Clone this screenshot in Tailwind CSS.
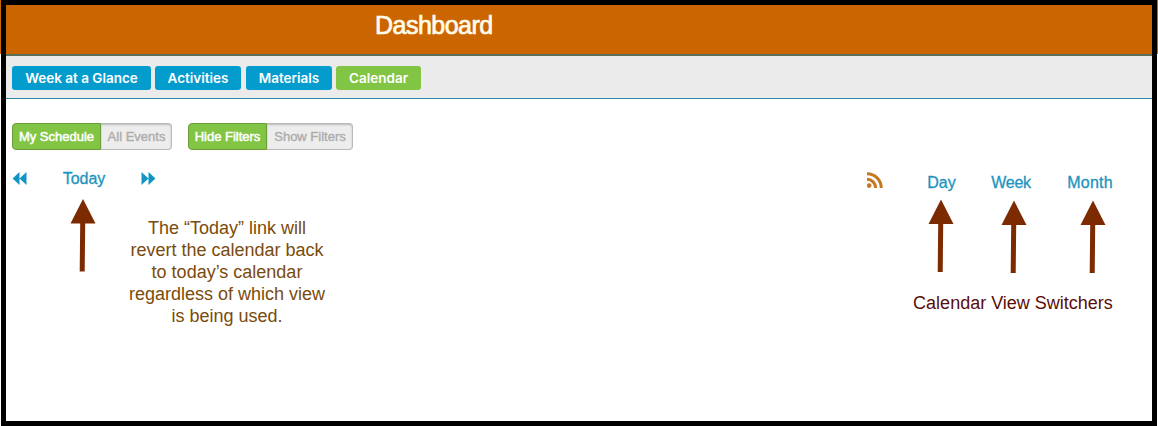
<!DOCTYPE html>
<html lang="en">
<head>
<meta charset="utf-8">
<title>Dashboard</title>
<script src="https://cdn.jsdelivr.net/npm/@tailwindcss/browser@4"></script>
</head>
<body class="bg-white font-['Liberation_Sans',Arial,sans-serif]">
<div class="relative h-[426px] w-[1158px] overflow-hidden bg-[linear-gradient(#cc6600_54px,#fff_54px)] px-px">
  <div class="flex h-full flex-col border-5 border-black bg-white">
    <header class="h-[51px] shrink-0 border-b-2 border-[#5a6f57] bg-[#cb6500] pl-[369px]">
      <h1 class="text-[25px] leading-[41px] tracking-[-0.52px] text-[#fffbe9] [-webkit-text-stroke:0.7px_#fffbe9]">Dashboard</h1>
    </header>
    <nav class="flex h-[43px] shrink-0 items-start border-b border-[#2f86a6] bg-[#ecebec] pt-2.5 pl-1.5 font-[Inter,sans-serif] text-[13.5px] leading-6 font-semibold text-white">
      <a class="mr-1 h-6 w-[139px] rounded-[3px] bg-[#049bcd] text-center whitespace-nowrap">Week at a Glance</a>
      <a class="mr-[5px] h-6 w-[86px] rounded-[3px] bg-[#049bcd] text-center">Activities</a>
      <a class="mr-1 h-6 w-[86px] rounded-[3px] bg-[#049bcd] text-center">Materials</a>
      <a class="h-6 w-[85px] rounded-[3px] bg-[#82c545] text-center">Calendar</a>
    </nav>
    <main class="pl-1.5">
      <div class="mt-6 flex gap-4 text-[13px] leading-[25px] whitespace-nowrap">
        <div class="flex h-[27px]">
          <span class="w-[89px] rounded-l border border-[#6a9c3c] bg-[#82c545] text-center text-white [-webkit-text-stroke:0.5px_white]">My Schedule</span>
          <span class="w-[71px] rounded-r border border-l-0 border-[#b9b9b9] bg-[#eeedee] pl-px text-center text-[#adadad] shadow-[inset_0_1px_2px_#bbb] [-webkit-text-stroke:0.4px_#adadad]">All Events</span>
        </div>
        <div class="flex h-[27px]">
          <span class="w-[79px] rounded-l border border-[#6a9c3c] bg-[#82c545] text-center text-white [-webkit-text-stroke:0.5px_white]">Hide Filters</span>
          <span class="w-[86px] rounded-r border border-l-0 border-[#b9b9b9] bg-[#eeedee] pl-px text-center text-[#adadad] shadow-[inset_0_1px_2px_#bbb] [-webkit-text-stroke:0.4px_#adadad]">Show Filters</span>
        </div>
      </div>
      <div class="mt-[17px] flex items-start text-[16px] leading-6 text-[#1c94c0] [-webkit-text-stroke:0.3px_#1c94c0]">
        <svg class="mt-[5px] h-[13px] w-[15px]" viewBox="0 0 15 13" fill="#1295c4"><path d="M7.5 0v13L.5 6.5zM14.5 0v13l-7-6.5z"/></svg>
        <a class="ml-[35px] w-[44px] text-center">Today</a>
        <svg class="mt-[5px] ml-[35px] h-[13px] w-[15px]" viewBox="0 0 15 13" fill="#1295c4"><path d="M.5 0v13l7-6.5zM7.5 0v13l7-6.5z"/></svg>
        <svg class="mt-[5px] ml-[711px] h-4 w-4" viewBox="0 0 16 16" fill="none" stroke="#c57722" stroke-width="3"><path d="M0 1.8A14 14 0 0 1 14.200 16M0 7.300A8.600 8.600 0 0 1 8.700 16"/><circle cx="2.2" cy="13.6" r="2.3" fill="#c57722" stroke="none"/></svg>
        <a class="mt-1 ml-[44px] w-[29px] text-center">Day</a>
        <a class="mt-1 ml-[35px] w-[40px] text-center tracking-[-0.3px]">Week</a>
        <a class="mt-1 ml-[36px] w-[46px] text-center tracking-[0.2px]">Month</a>
      </div>
    </main>
  </div>
  <svg class="absolute inset-0 h-[426px] w-[1158px]" viewBox="0 0 1158 426">
    <defs><path id="arrow" d="M0 0L12.5 24.500H2.2L1.7 72.5H-3.3L-2.8 24.500H-12.5z" fill="#7c2b00"/></defs>
    <use href="#arrow" x="83" y="199"/>
    <use href="#arrow" x="941" y="199.500"/>
    <use href="#arrow" x="1014" y="200.500"/>
    <use href="#arrow" x="1093" y="200.500"/>
  </svg>
  <p class="absolute top-[217px] left-[117px] w-[220px] text-center text-[18px] leading-[22px] text-[#7a4b0c]">The “Today” link will<br>revert the calendar back<br>to today’s calendar<br>regardless of which view<br>is being used.</p>
  <p class="absolute top-[292px] left-[903px] w-[220px] text-center text-[18px] leading-[22px] text-[#5a0d08]">Calendar View Switchers</p>
</div>
</body>
</html>
